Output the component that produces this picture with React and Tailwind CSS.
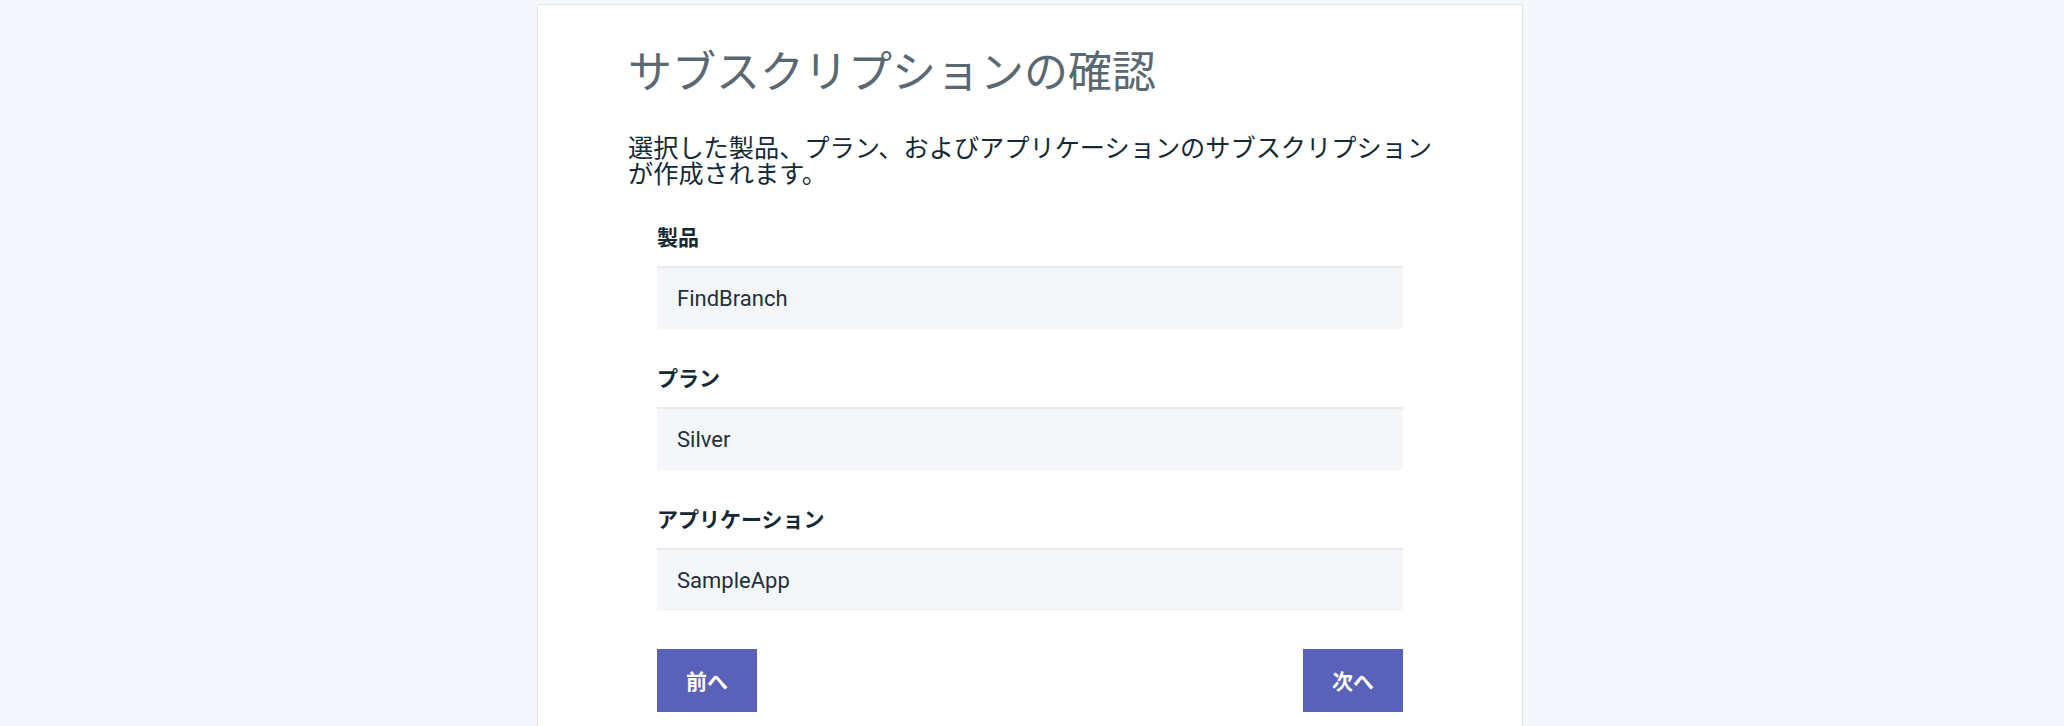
import React from "react";

const fields = [
  { label: "製品", value: "FindBranch" },
  { label: "プラン", value: "Silver" },
  { label: "アプリケーション", value: "SampleApp" },
];

const Field = ({ label, value, first }) => {
  return (
    <div className={first ? "" : "mt-[36px]"}>
      <div className="text-[21px] leading-[24px] font-bold text-[#152935]">
        {label}
      </div>
      <div className="mt-[18px] h-[63px] flex items-center pl-[20px] bg-[#f4f6f9] border-t-2 border-[#e6e9ee]">
        <span className="font-['Roboto',sans-serif] text-[22px] text-[#233039]">
          {value}
        </span>
      </div>
    </div>
  );
};

const App = () => {
  return (
    <div className="min-h-screen bg-[#f4f7fb] pt-[4px] font-['Noto_Sans_CJK_JP',sans-serif]">
      <div className="ml-[537px] w-[986px] min-h-[800px] bg-white border border-[#dfe3e6] pl-[90px] pt-[42px]">
        <h1 className="text-[44px] leading-none font-normal text-[#5a6872]">
          サブスクリプションの確認
        </h1>
        <p className="mt-[42px] w-[820px] text-[25.2px] leading-[26px] text-[#152935]">
          選択した製品、プラン、およびアプリケーションのサブスクリプションが作成されます。
        </p>
        <div className="mt-[39px] ml-[29px] w-[746px]">
          {fields.map((f, i) => (
            <Field key={f.label} label={f.label} value={f.value} first={i === 0} />
          ))}
          <div className="mt-[38px] flex justify-between">
            <button className="w-[100px] h-[63px] bg-[#5a61b8] text-white text-[21px] font-bold">
              前へ
            </button>
            <button className="w-[100px] h-[63px] bg-[#5a61b8] text-white text-[21px] font-bold">
              次へ
            </button>
          </div>
        </div>
      </div>
    </div>
  );
};

export default App;
